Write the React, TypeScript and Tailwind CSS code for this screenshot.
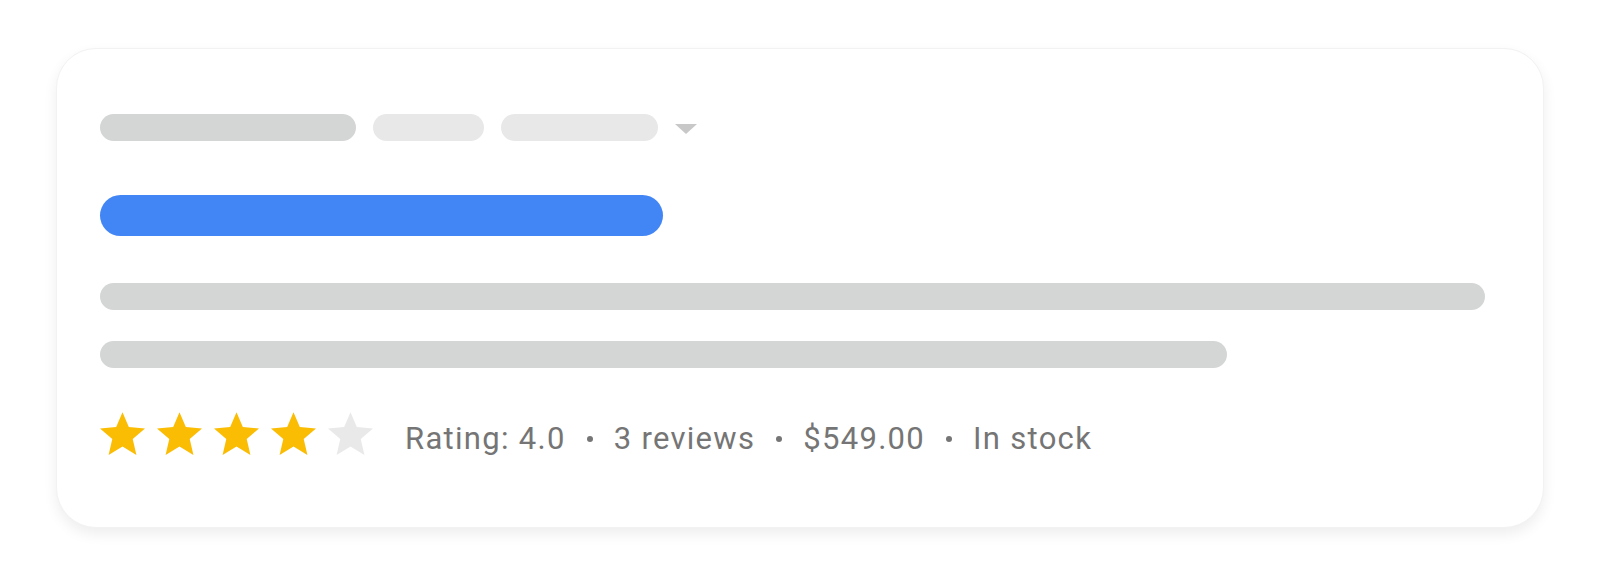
const STAR = 'M12 17.27L18.18 21l-1.64-7.03L22 9.24l-7.19-.61L12 2 9.19 8.63 2 9.24l5.46 4.73L5.82 21z'

function Stars({ rating }: { rating: number }) {
  return (
    <div className="flex gap-[12px]" role="img" aria-label={`${rating} stars out of 5`}>
      {Array.from({ length: 5 }).map((_, i) => (
        <svg
          key={i}
          viewBox="2 2 20 19"
          className={`w-[45px] h-[43px] ${i < rating ? 'text-[#fbbc04]' : 'text-[#e9e9e9]'}`}
          fill="currentColor"
          aria-hidden="true"
        >
          <path d={STAR} />
        </svg>
      ))}
    </div>
  )
}

const meta = ['Rating: 4.0', '3 reviews', '$549.00', 'In stock']

export default function App() {
  return (
    <div className="w-[1600px] h-[573px] bg-white pt-[48px] pl-[56px]">
      <div className="w-[1488px] h-[480px] rounded-[40px] bg-white border border-[#f2f2f2] shadow-[0_6px_14px_rgba(0,0,0,0.07)] pl-[43px] pt-[65px] pr-[58px]">
        <div className="flex items-center">
          <div className="h-[27px] w-[256px] rounded-full bg-[#d4d6d5]" />
          <div className="h-[27px] w-[111px] rounded-full bg-[#e8e8e8] ml-[17px]" />
          <div className="h-[27px] w-[157px] rounded-full bg-[#e8e8e8] ml-[17px]" />
          <svg viewBox="0 0 22 10" className="w-[22px] h-[10px] ml-[17px] mt-[2px]" aria-hidden="true">
            <path d="M0 0h22L11 10z" fill="#c8c8c8" />
          </svg>
        </div>
        <div className="h-[41px] w-[563px] rounded-full bg-[#4285f4] mt-[54px]" />
        <div className="h-[27px] w-[1385px] rounded-full bg-[#d4d6d5] mt-[47px]" />
        <div className="h-[27px] w-[1127px] rounded-full bg-[#d4d6d5] mt-[31px]" />
        <div className="flex items-center mt-[44px]">
          <Stars rating={4} />
          <div className="flex items-center gap-[21px] ml-[32px] mt-[10px] text-[31px] tracking-[1.3px] text-[#757575] font-['Roboto',sans-serif] leading-none">
            {meta.map((m, i) => (
              <div key={m} className="flex items-center gap-[21px]">
                {i > 0 && <span className="w-[6px] h-[6px] rounded-full bg-[#757575]" />}
                <span>{m}</span>
              </div>
            ))}
          </div>
        </div>
      </div>
    </div>
  )
}
